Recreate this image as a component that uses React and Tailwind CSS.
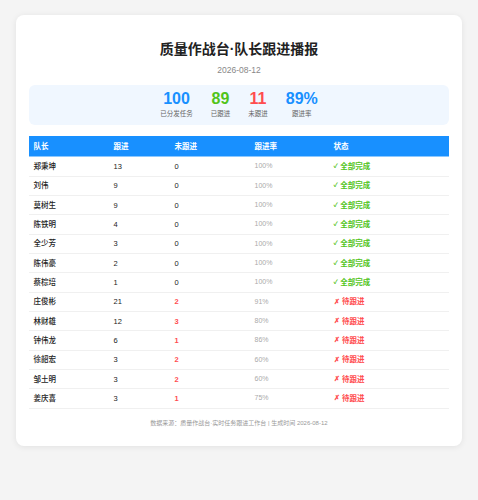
import React from "react";

const rows = [
  { name: "郑秉坤", done: 13, todo: 0, rate: "100%" },
  { name: "刘伟", done: 9, todo: 0, rate: "100%" },
  { name: "莫树生", done: 9, todo: 0, rate: "100%" },
  { name: "陈铁明", done: 4, todo: 0, rate: "100%" },
  { name: "全少芳", done: 3, todo: 0, rate: "100%" },
  { name: "陈伟豪", done: 2, todo: 0, rate: "100%" },
  { name: "蔡棕培", done: 1, todo: 0, rate: "100%" },
  { name: "庄俊彬", done: 21, todo: 2, rate: "91%" },
  { name: "林财雄", done: 12, todo: 3, rate: "80%" },
  { name: "钟伟龙", done: 6, todo: 1, rate: "86%" },
  { name: "徐韶宏", done: 3, todo: 2, rate: "60%" },
  { name: "邹土明", done: 3, todo: 2, rate: "60%" },
  { name: "姜庆喜", done: 3, todo: 1, rate: "75%" },
];

const stats = [
  { value: "100", label: "已分发任务", color: "text-[#1890ff]" },
  { value: "89", label: "已跟进", color: "text-[#52c41a]" },
  { value: "11", label: "未跟进", color: "text-[#ff4d4f]" },
  { value: "89%", label: "跟进率", color: "text-[#1890ff]" },
];

const cols = "grid grid-cols-[80px_61px_80px_79px_120px] items-center";

export default function App() {
  return (
    <div
      className="min-h-[500px] bg-[#f4f4f4] pt-[15px] px-[16px]"
      style={{ fontFamily: '"Liberation Sans", "Noto Sans CJK SC", sans-serif' }}
    >
      <div className="bg-white rounded-[8px] shadow-[0_1px_6px_rgba(0,0,0,0.08)] px-[13px] pt-[24px] pb-[18px]">
        <h1 className="text-center text-[14px] leading-[20px] font-bold text-[#222]">
          质量作战台·队长跟进播报
        </h1>
        <div className="text-center text-[8.5px] leading-[12px] text-[#888] mt-[5px]">2026-08-12</div>

        <div className="mt-[9px] bg-[#f0f7ff] rounded-[6px] h-[40px] flex justify-center items-start gap-[18px] pt-[5px]">
          {stats.map((s) => (
            <div key={s.label} className="flex flex-col items-center">
              <div className={`text-[16px] leading-[18px] font-bold ${s.color}`}>{s.value}</div>
              <div className="text-[6.5px] leading-[9px] text-[#666] mt-[1px]">{s.label}</div>
            </div>
          ))}
        </div>

        <div className="mt-[11px]">
          <div className={`${cols} h-[21.3px] bg-[#1890ff] text-white text-[7.5px] font-bold border-b border-[#8cc8ff]`}>
            <div className="pl-[4.5px]">队长</div>
            <div className="pl-[4.5px]">跟进</div>
            <div className="pl-[4.5px]">未跟进</div>
            <div className="pl-[4.5px]">跟进率</div>
            <div className="pl-[4.5px]">状态</div>
          </div>
          {rows.map((r) => {
            const ok = r.todo === 0;
            return (
              <div key={r.name} className={`${cols} h-[19.35px] border-b border-[#f0f0f0] text-[7.5px]`}>
                <div className="pl-[4.5px] text-[#222] font-medium">{r.name}</div>
                <div className="pl-[4.5px] text-[#222]">{r.done}</div>
                <div className={`pl-[4.5px] ${ok ? "text-[#222]" : "text-[#ff4d4f] font-bold"}`}>{r.todo}</div>
                <div className="pl-[4.5px] text-[#aaa] text-[7px]">{r.rate}</div>
                <div className={`pl-[4.5px] font-bold flex items-center ${ok ? "text-[#52c41a]" : "text-[#ff4d4f]"}`}>
                  <span className={`${ok ? "text-[6px]" : "text-[7px]"} mr-[2.5px]`}>{ok ? "✓" : "✗"}</span>
                  {ok ? "全部完成" : "待跟进"}
                </div>
              </div>
            );
          })}
        </div>

        <div className="mt-[9px] text-center text-[6px] leading-[10px] text-[#999]">
          数据来源：质量作战台·实时任务跟进工作台 | 生成时间 2026-08-12
        </div>
      </div>
    </div>
  );
}
